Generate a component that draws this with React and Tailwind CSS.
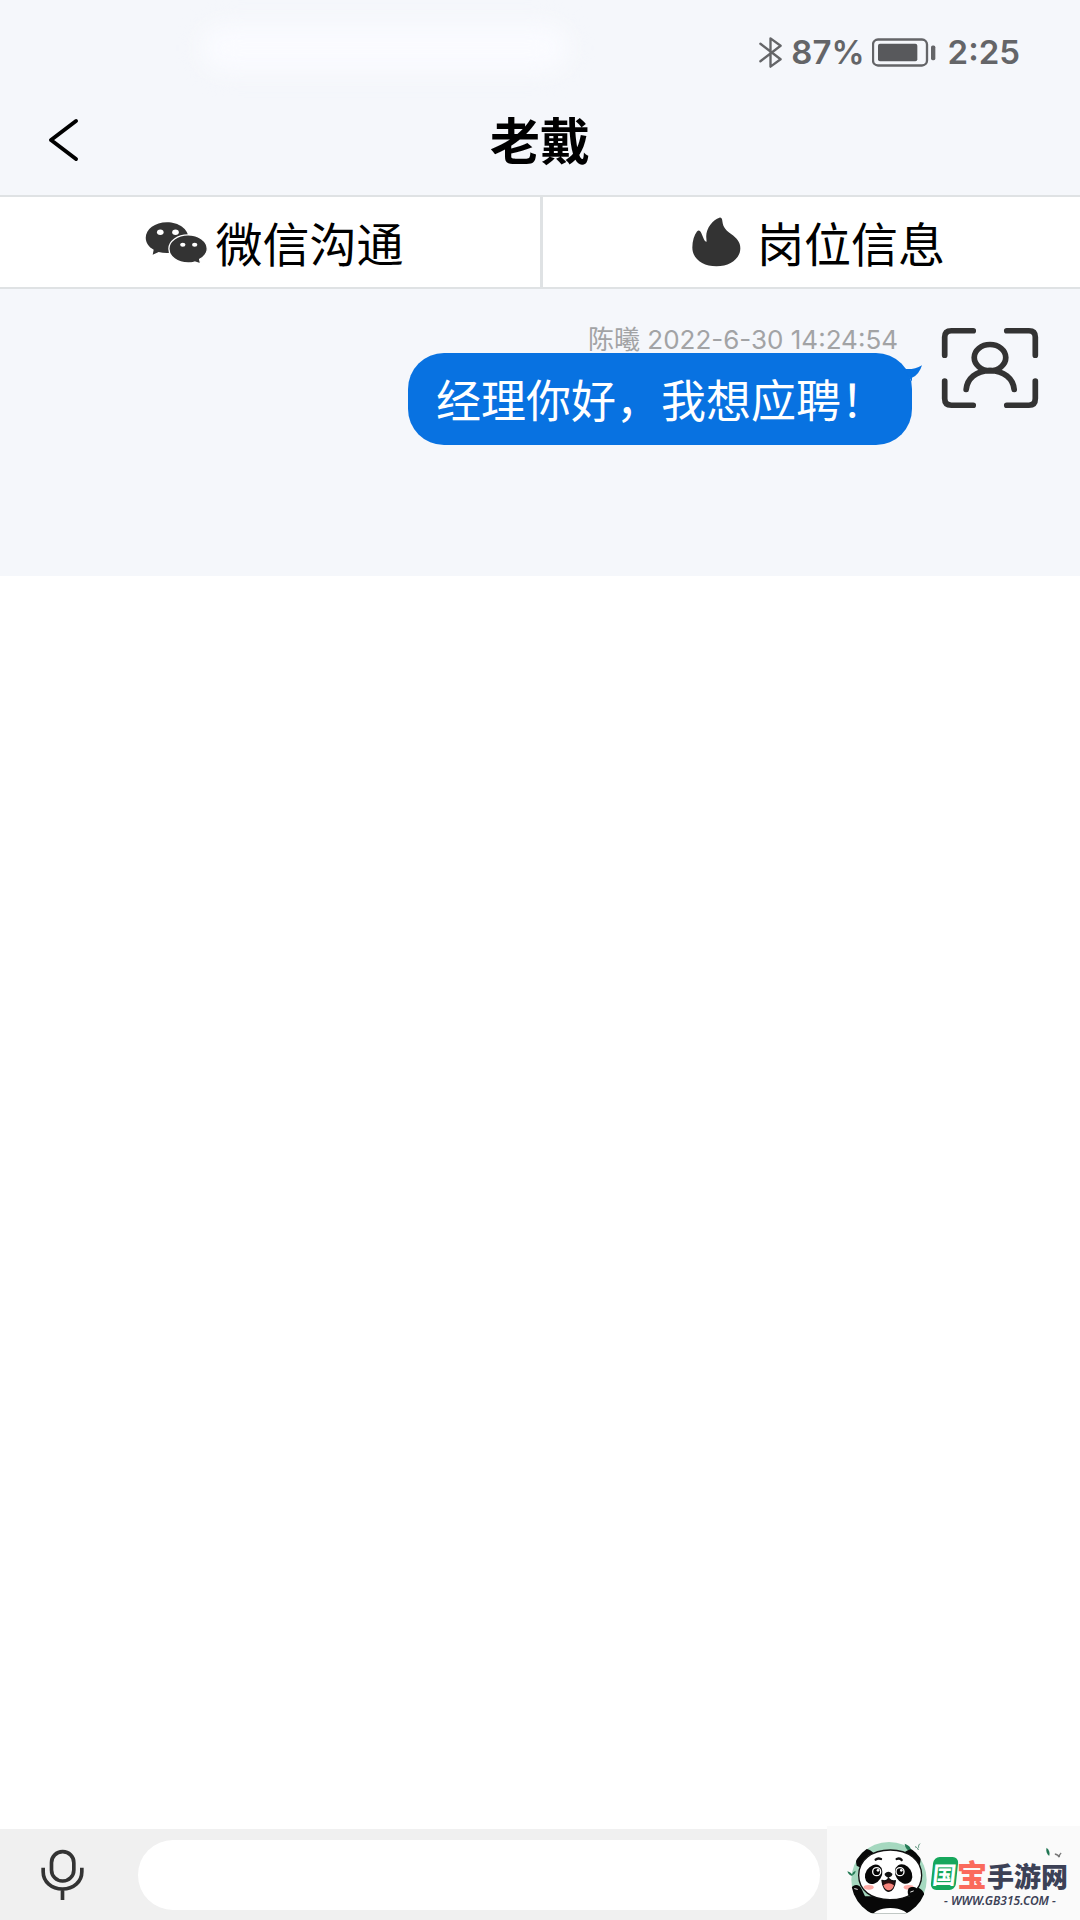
function BluetoothIcon() {
  return (
    <svg viewBox="0 0 68 92" className="h-[31px] w-[23px]" fill="none" stroke="#646568" strokeWidth="7" strokeLinejoin="round" strokeLinecap="round" aria-hidden="true">
      <path d="M4 20 64 66 34 88V4L64 26 4 72" />
    </svg>
  );
}

function BatteryIcon() {
  return (
    <svg viewBox="0 0 192 86" className="h-[29px] w-[64px]" aria-hidden="true">
      <rect x="3" y="4" width="162" height="78" rx="15" fill="none" stroke="#646568" strokeWidth="7" />
      <rect x="18" y="17" width="118" height="52" rx="6" fill="#58595c" />
      <rect x="177" y="22" width="13" height="44" rx="5" fill="#646568" />
    </svg>
  );
}

function WechatIcon() {
  return (
    <svg viewBox="68 88 190 130" className="h-[43px] w-[63px]" aria-hidden="true">
      <path fill="#333" d="M134 92c-36 0-64 21-64 47 0 15 9 28 24 36l-3 15 18-8c8 2 16 3 25 3 36 0 65-20 65-46s-29-47-65-47Z" />
      <path fill="#333" stroke="#fff" strokeWidth="4" d="M198 130c-32 0-58 19-58 42 0 24 26 43 58 43 7 0 14-1 20-3l18 6-3-14c14-8 23-19 23-32 0-23-26-42-58-42Z" />
      <g fill="#fff">
        <ellipse cx="114" cy="122" rx="10" ry="8" />
        <ellipse cx="160" cy="122" rx="10" ry="8" />
        <ellipse cx="182" cy="160" rx="8" ry="6" />
        <ellipse cx="218" cy="160" rx="8" ry="6" />
      </g>
    </svg>
  );
}

function FlameIcon() {
  return (
    <svg viewBox="98 80 148 149" className="h-[50px] w-[49px]" aria-hidden="true">
      <path fill="#333" d="M181 81c6-1 8 4 9 12 2 18 12 27 26 37 18 13 28 25 28 43 0 32-32 55-72 55-42 0-73-23-73-57 0-20 6-37 14-48 5-6 10-3 13 4l8 19c2 5 7 9 8 7l-1-14c-1-26 20-52 40-58Z" />
    </svg>
  );
}

function ScanUserIcon() {
  return (
    <svg viewBox="604 52 292 244" className="h-[82px] w-[98px] shrink-0" fill="none" stroke="#333" strokeLinecap="round" strokeWidth="17" role="img" aria-label="头像">
      <path d="M615 136V82q0-19 20-19h65M800 63h66q19 0 19 19v54M615 213v52q0 20 20 20h65M800 285h66q19 0 19-20v-52" />
      <ellipse cx="750" cy="143" rx="47" ry="39" />
      <path d="M679 238c3-32 29-56 71-56s69 24 72 56" />
    </svg>
  );
}

function MicIcon() {
  return (
    <svg viewBox="122 114 134 156" className="h-[52px] w-[45px]" fill="none" stroke="#333" strokeWidth="11" aria-hidden="true">
      <rect x="156" y="122" width="67" height="88" rx="33" />
      <path d="M131 170v12c0 30 25 52 58 52s58-22 58-52v-12M189 235v32" />
    </svg>
  );
}

function Panda() {
  return (
    <svg viewBox="0 0 300 285" className="h-[95px] w-[100px] shrink-0" role="img" aria-label="熊猫">
      <defs>
        <clipPath id="round">
          <path d="M33 47h228v215H33Z" />
        </clipPath>
        <clipPath id="disc">
          <circle cx="147" cy="161" r="114" />
        </clipPath>
      </defs>
      <g clipPath="url(#round)">
        <circle cx="147" cy="161" r="113" fill="#a5d8bf" />
      </g>
      <path d="M194 53c14 5 20 13 21 26-13-5-20-13-21-26Z" fill="#237a55" />
      <path d="M22 136c9 2 14 7 16 14-8-1-14-6-16-14ZM36 147c1-7 5-11 11-13-1 8-4 12-11 13Z" fill="#237a55" />
      <path d="M225 62c6 2 9 5 10 10M236 65c-1-5 0-8 4-12" stroke="#45866a" strokeWidth="3" fill="none" />
      <g clipPath="url(#round)">
        <g clipPath="url(#disc)">
          <path d="M32 190c5-16 26-18 33-1l10 22h144l-14-11c-6-14 13-25 28-16 22 10 26 30 16 49l-30 44H72L35 230Z" fill="#080808" />
          <path d="M50 119c-5-20 0-43 15-49 14-6 32 4 40 16L68 128ZM187 85c15-15 34-20 45-9 13 12 13 34 1 52l-17 2Z" fill="#080808" />
          <ellipse cx="151" cy="278" rx="58" ry="32" fill="#fff" />
        </g>
      </g>
      <path d="M151 72c54 0 94 31 94 76 0 46-40 73-95 73-56 0-94-28-94-73 0-46 39-76 95-76Z" fill="#fff" stroke="#111" strokeWidth="4" />
      <path d="M107 101q6-6 16-2M170 99q10-4 15 3" fill="none" stroke="#111" strokeWidth="7" strokeLinecap="round" />
      <ellipse cx="101" cy="145" rx="24" ry="31" transform="rotate(32 101 145)" fill="#080808" />
      <ellipse cx="191" cy="144" rx="24" ry="31" transform="rotate(-32 191 144)" fill="#080808" />
      <g fill="#050505" stroke="#fff" strokeWidth="4">
        <circle cx="110" cy="137" r="12" />
        <circle cx="180" cy="137" r="12" />
      </g>
      <circle cx="114" cy="133" r="4" fill="#fff" />
      <circle cx="184" cy="133" r="4" fill="#fff" />
      <path d="M134 143q11-11 23 0c1 7-8 11-12 11s-12-5-11-11Z" fill="#111" />
      <path d="M126 163c2 19 10 33 20 33s18-13 20-32q-10 4-20-7-9 11-20 6Z" fill="#301010" stroke="#111" strokeWidth="4" strokeLinejoin="round" />
      <path d="M130 178q16-12 32 0c-5 20-26 20-32 0Z" fill="#f7857d" />
      <path d="M145 153v7" stroke="#111" strokeWidth="3" />
      <ellipse cx="86" cy="184" rx="15" ry="7" fill="#ffaaa5" />
      <ellipse cx="206" cy="184" rx="15" ry="7" fill="#ffaaa5" />
      <path d="M206 187c11-9 29-3 33 12l-16 18c-18 0-24-16-17-30Z" fill="#080808" />
      <path d="M44 188l8 2M212 198l8-3" stroke="#eee" strokeWidth="3" strokeLinecap="round" />
    </svg>
  );
}

function SiteBadge() {
  return (
    <a href="#site" className="absolute bottom-0 right-0 flex h-[94px] w-[253px] bg-[#fafafa] pl-[13px] font-['Noto_Sans_CJK_SC',sans-serif]">
      <Panda />
      <span className="-ml-2 flex flex-col items-center pt-[28px]">
        <span className="flex h-[38px] items-center">
          <span className="flex h-[33px] w-[25px] -skew-x-6 items-center justify-center rounded-[6px] bg-[#16a75c] text-[24px] font-bold leading-none text-white">国</span>
          <span className="text-[30px] font-black leading-none text-[#fa6a5c]">宝</span>
          <span className="pt-1 text-[27px] font-black leading-none text-[#3c4156] [font-style:oblique_8deg]">手游网</span>
        </span>
        <span className="font-['Noto_Sans',sans-serif] text-[12px] font-semibold italic leading-[18px] text-[#3c4156]">- WWW.GB315.COM -</span>
      </span>
      <svg viewBox="0 0 50 36" className="absolute right-[18px] top-[21px] h-3 w-[17px]" aria-hidden="true">
        <path d="M4 2c9 7 11 16 8 25C4 20 2 12 4 2Z" fill="#207653" />
        <path d="M29 21c7 1 11 4 13 10M42 31c0-6 2-10 6-13" fill="none" stroke="#777" strokeWidth="4" />
      </svg>
    </a>
  );
}

export default function App() {
  return (
    <div className="flex min-h-screen flex-col bg-white font-['Noto_Sans_CJK_SC',sans-serif] text-black">
      <header className="border-b-2 border-[#dfe2e4] bg-[#f5f7fb]">
        <div className="relative flex h-[100px] items-center justify-end pr-[60px] pt-1 font-['Inter',sans-serif] text-[33px] font-semibold leading-none text-[#646568]">
          <div className="absolute left-[200px] top-6 h-12 w-[370px] rounded-full bg-[#fafbff] blur-md" />
          <BluetoothIcon />
          <span className="ml-[9px]">87%</span>
          <span className="ml-[7px]"><BatteryIcon /></span>
          <time className="ml-3">2:25</time>
        </div>
        <div className="grid h-[95px] grid-cols-[1fr_auto_1fr] items-center pb-4">
          <button type="button" aria-label="返回" className="ml-[47px] w-8">
            <svg viewBox="0 0 32 44" className="h-11 w-8" fill="none" stroke="black" strokeWidth="4" strokeLinecap="round" strokeLinejoin="round" aria-hidden="true">
              <path d="M29 3 4 22l25 19" />
            </svg>
          </button>
          <h1 className="pb-1 text-[50px] font-bold leading-none">老戴</h1>
        </div>
      </header>

      <nav className="grid h-[92px] grid-cols-2 border-b-2 border-[#dfe2e4] text-[47px] leading-none">
        <button type="button" className="flex items-center justify-center gap-2 pl-2">
          <WechatIcon />
          <span className="pb-[2px]">微信沟通</span>
        </button>
        <button type="button" className="flex items-center justify-center gap-4 border-l-[3px] border-[#dfe2e4] pl-[14px]">
          <FlameIcon />
          <span className="pb-[2px]">岗位信息</span>
        </button>
      </nav>

      <main className="flex min-h-[287px] items-start justify-end gap-[29px] bg-[#f5f7fb] pr-[41px] pt-[38px]">
        <div className="flex flex-col items-end">
          <p className="mr-[14px] font-['Inter','Noto_Sans_CJK_SC',sans-serif] text-[26px] leading-[26px] text-[#a2a3a5]">陈曦 2022-6-30 14:24:54</p>
          <div className="relative rounded-[36px] bg-[#0872e1] pb-6 pl-[28px] pr-[26px] pt-6 text-[45px] leading-[44px] text-white">
            经理你好，我想应聘！
            <svg viewBox="0 0 54 50" className="absolute -right-[10px] top-3 h-[17px] w-[18px]" aria-hidden="true">
              <path d="M0 11q29 4 54-11-8 27-30 38v12Z" fill="#0872e1" />
            </svg>
          </div>
        </div>
        <ScanUserIcon />
      </main>

      <footer className="relative mt-auto flex h-[91px] items-center gap-[53px] bg-[#f0f0f0] pl-[40px] pr-[260px]">
        <button type="button" aria-label="语音"><MicIcon /></button>
        <input type="text" aria-label="消息" className="h-[70px] min-w-0 flex-1 rounded-full bg-white px-8 text-4xl outline-none" />
        <SiteBadge />
      </footer>
    </div>
  );
}
